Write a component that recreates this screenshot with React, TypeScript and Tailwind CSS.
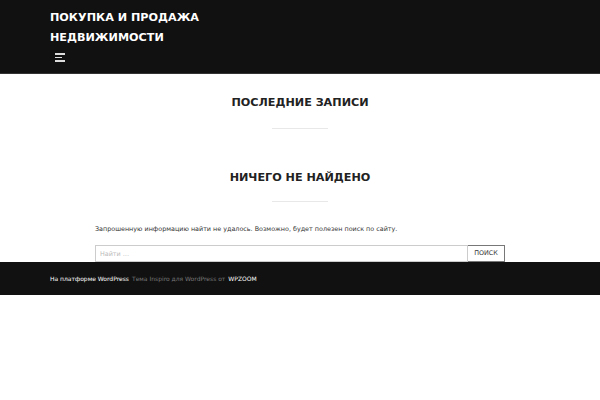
import React from "react";

const font = "font-['DejaVu_Sans',sans-serif]";

export default function App() {
  return (
    <div className={`w-[600px] h-[400px] bg-white ${font}`}>
      {/* HEADER */}
      <header className="bg-[#111111] h-[74px] px-[50px] pt-[8px] border-b border-[#333]">
        <h1 className="text-white font-bold text-[11.2px] leading-[20px] uppercase">
          Покупка и продажа
          <br />
          недвижимости
        </h1>
        <div className="mt-[5px] ml-[5px] flex flex-col gap-[2px] w-[10px]">
          <span className="block h-[1.5px] w-[10px] bg-[#ddd]" />
          <span className="block h-[1.5px] w-[7px] bg-[#ddd]" />
          <span className="block h-[1.5px] w-[10px] bg-[#ddd]" />
        </div>
      </header>

      {/* MAIN */}
      <main className="flex flex-col items-center">
        <h2 className="mt-[21px] text-[11.2px] leading-[16px] font-bold text-[#222]">
          ПОСЛЕДНИЕ ЗАПИСИ
        </h2>
        <div className="mt-[17px] w-[56px] h-px bg-[#e8e8e8]" />

        <h2 className="mt-[41px] text-[11.2px] leading-[16px] font-bold text-[#222]">
          НИЧЕГО НЕ НАЙДЕНО
        </h2>
        <div className="mt-[15px] w-[56px] h-px bg-[#e8e8e8]" />

        <section className="w-[410px] mt-[21px]">
          <p className="text-[6.4px] leading-[12px] text-[#333]">
            Запрошенную информацию найти не удалось. Возможно, будет полезен поиск по сайту.
          </p>
          <form className="mt-[10px] flex h-[17px]">
            <input
              placeholder="Найти …"
              className="flex-1 h-full border border-[#ccc] px-[4px] text-[6.4px] text-[#333] placeholder:text-[#bbb] outline-none"
            />
            <button
              type="button"
              className="w-[37px] h-full border border-l-0 border-[#777] text-[6.4px] text-[#333] bg-white"
            >
              ПОИСК
            </button>
          </form>
        </section>
      </main>

      {/* FOOTER */}
      <footer className="bg-[#111111] h-[33px] px-[50px] flex items-center text-[6px]">
        <span className="text-white">На платформе WordPress</span>
        <span className="ml-[3px] text-[#777]">Тема Inspiro для WordPress от</span>
        <span className="ml-[3px] text-white">WPZOOM</span>
      </footer>
    </div>
  );
}
